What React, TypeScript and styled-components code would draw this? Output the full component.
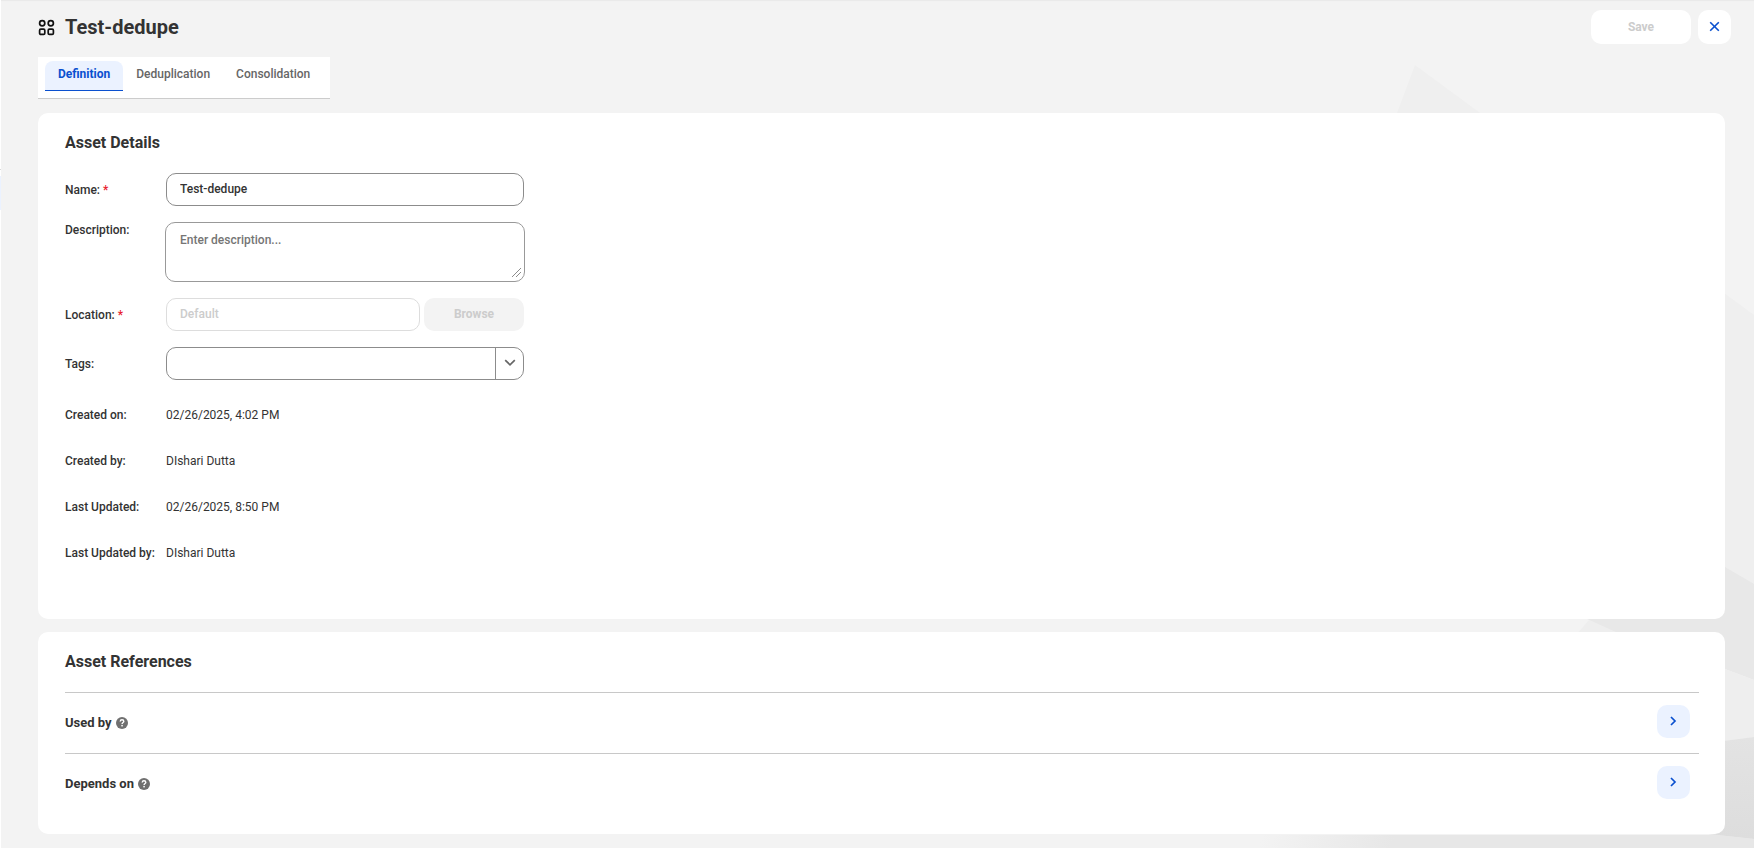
import React, { useState } from "react";
import styled, { createGlobalStyle } from "styled-components";

const GlobalStyle = createGlobalStyle`
  *, *::before, *::after { box-sizing: border-box; }
  body {
    margin: 0;
    background: #f3f3f3;
    color: #333333;
    font-family: Roboto, "Liberation Sans", sans-serif;
    font-size: 12px;
    line-height: 16px;
  }
  button, input, textarea, select { font: inherit; }
`;

const Page = styled.div`
  position: relative;
  display: flex;
  min-height: 100vh;
  overflow: hidden;
  box-shadow: inset 0 2px 1px -1px #e9e9e9;
`;

const Backdrop = styled.svg`
  position: absolute;
  top: 0;
  right: 0;
`;

const Rail = styled.aside`
  flex: none;
  width: 1px;
  padding-top: 169px;
  background: #ffffff;
`;

const RailItem = styled.div`
  height: 41px;
  border-top: 1px solid #d8d8d8;
  background: linear-gradient(#ffffff 6px, #ebf2ff 6px);
`;

const Main = styled.main`
  position: relative;
  flex: 1;
  min-width: 0;
  padding: 10px 29px 13px 37px;
`;

const Header = styled.header`
  display: flex;
  align-items: center;
  gap: 10px;
  height: 34px;
  margin: 0 -6px 13px 0;
`;

const Title = styled.h1`
  flex: 1;
  margin: 0;
  font-size: 20px;
  line-height: 34px;
  font-weight: 700;
`;

const Actions = styled.div`
  display: flex;
  gap: 7px;
`;

const Button = styled.button<{ $tone?: "white" | "grey" | "blue"; $square?: boolean }>`
  display: flex;
  flex: none;
  align-items: center;
  justify-content: center;
  width: ${(p) => (p.$square ? 33 : 100)}px;
  height: ${(p) => (p.$tone === "white" ? 34 : 33)}px;
  padding: 0 0 1px;
  border: 0;
  border-radius: 10px;
  background: ${(p) => (p.$tone === "blue" ? "#ebf2ff" : p.$tone === "grey" ? "#f3f3f3" : "#ffffff")};
  color: #0a50cf;
  font-weight: 700;
  &:disabled { color: #cccccc; }
`;

const TabList = styled.div`
  display: flex;
  width: fit-content;
  padding: 4px 7px 7px;
  margin-bottom: 14px;
  border-bottom: 1px solid #cccccc;
  background: #ffffff;
`;

const Tab = styled.button<{ $active: boolean }>`
  height: 30px;
  padding: 0 13px 3px;
  border: 0;
  border-bottom: 1px solid ${(p) => (p.$active ? "#0a50cf" : "transparent")};
  border-radius: ${(p) => (p.$active ? "8px 8px 0 0" : "0")};
  background: ${(p) => (p.$active ? "#ebf2ff" : "transparent")};
  color: ${(p) => (p.$active ? "#0a50cf" : "#666666")};
  font-weight: ${(p) => (p.$active ? 700 : 500)};
`;

const Card = styled.section`
  padding: 18px 26px 0 27px;
  border-radius: 10px;
  background: #ffffff;
`;

const DetailsCard = styled(Card)`
  padding-bottom: 58px;
  margin-bottom: 13px;
`;

const ReferencesCard = styled(Card)`
  padding-bottom: 20px;
`;

const Heading = styled.h2`
  margin: 0 0 18px;
  font-size: 16px;
  line-height: 24px;
  font-weight: 700;
`;

const Form = styled.form`
  display: flex;
  flex-direction: column;
  gap: 16px;
`;

const Row = styled.div<{ $top?: boolean }>`
  display: grid;
  grid-template-columns: 101px minmax(0, 358px);
  align-items: ${(p) => (p.$top ? "start" : "center")};
`;

const Label = styled.label`
  font-weight: 500;
`;

const Required = styled.span`
  color: #e8222e;
`;

const Control = styled.input`
  flex: 1;
  width: 100%;
  min-width: 0;
  height: 33px;
  padding: 0 13px 2px;
  border: 1px solid #8c8c8c;
  border-radius: 10px;
  background: #ffffff;
  color: #333333;
  font-weight: 500;
  &:disabled { border-color: #dddddd; color: #cccccc; }
`;

const TextArea = styled.textarea`
  display: block;
  width: calc(100% + 2px);
  height: 60px;
  margin: 0 -1px;
  padding: 9px 14px;
  border: 1px solid #999999;
  border-radius: 10px;
  color: #333333;
  font-weight: 500;
  resize: vertical;
  &::placeholder { color: #757575; }
  &::-webkit-resizer {
    background: linear-gradient(
        135deg,
        transparent 46%,
        #8c8c8c 47% 53%,
        transparent 54% 68%,
        #8c8c8c 69% 75%,
        transparent 76%
      ) 3px 2px / 9px 9px no-repeat;
  }
`;

const Inline = styled.div`
  display: flex;
  gap: 4px;
`;

const SelectBox = styled.div`
  position: relative;
  height: 33px;
`;

const Select = styled.select`
  width: 100%;
  height: 33px;
  padding: 0 42px 0 14px;
  border: 1px solid #8c8c8c;
  border-radius: 10px;
  background: #ffffff;
  color: #333333;
  appearance: none;
`;

const Arrow = styled.span`
  position: absolute;
  top: 0;
  right: 0;
  bottom: 0;
  display: flex;
  align-items: center;
  justify-content: center;
  width: 29px;
  padding: 0 1px 2px 0;
  border-left: 1px solid #8c8c8c;
  pointer-events: none;
`;

const Facts = styled.dl`
  display: grid;
  grid-template-columns: 101px 1fr;
  row-gap: 30px;
  margin: 27px 0 0;
`;

const Term = styled.dt`
  font-weight: 500;
`;

const Value = styled.dd`
  margin: 0;
`;

const Reference = styled.div`
  display: flex;
  align-items: flex-start;
  justify-content: space-between;
  height: 61px;
  padding: 12px 9px 0 0;
  border-top: 1px solid #c8c8c8;
`;

const ReferenceLabel = styled.div`
  display: flex;
  align-items: center;
  gap: 4px;
  height: 36px;
`;

const ReferenceName = styled.h3`
  margin: 0;
  font-size: 13px;
  line-height: 16px;
  font-weight: 700;
`;

const AssetIcon = () => (
  <svg width="17" height="17" viewBox="0 0 17 17" fill="none" stroke="#111111" strokeWidth="1.7" aria-hidden="true">
    <circle cx="4.2" cy="4.2" r="2.6" />
    <circle cx="12.8" cy="4.2" r="2.6" />
    <rect x="1.6" y="10.2" width="5.2" height="5.2" rx="1.2" />
    <rect x="10.2" y="10.2" width="5.2" height="5.2" rx="1.2" />
  </svg>
);

const CloseIcon = () => (
  <svg width="11" height="11" viewBox="0 0 11 11" stroke="#0a50cf" strokeWidth="1.6" aria-hidden="true">
    <path d="M1.200 1.200l8.600 8.600M9.800 1.200l-8.600 8.600" />
  </svg>
);

const ChevronRight = () => (
  <svg width="7" height="10" viewBox="0 0 7 10" fill="none" stroke="#0a50cf" strokeWidth="1.7" aria-hidden="true">
    <path d="M1 1l4 4-4 4" />
  </svg>
);

const ChevronDown = () => (
  <svg width="12" height="8" viewBox="0 0 12 8" fill="none" stroke="#666666" strokeWidth="1.7" aria-hidden="true">
    <path d="M1.2 1.2L6 5.8l4.800-4.600" />
  </svg>
);

const HelpIcon = () => (
  <svg width="12" height="12" viewBox="0 0 12 12" fill="none" aria-hidden="true">
    <circle cx="6" cy="6" r="6" fill="#707070" />
    <path d="M4.200 4.500C4.300 3.300 5 2.800 6 2.800s1.800.6 1.800 1.600C7.800 5.500 6.100 5.600 6.100 7" stroke="#ffffff" strokeWidth="1.400" />
    <rect x="5.300" y="7.900" width="1.500" height="1.500" fill="#ffffff" />
  </svg>
);

const Facets = () => (
  <Backdrop width="554" height="848" viewBox="1200 0 554 848" aria-hidden="true">
    <defs>
      <linearGradient id="floor" gradientUnits="userSpaceOnUse" x1="1262" y1="835" x2="1385" y2="870">
        <stop offset="0" stopColor="#f3f3f3" />
        <stop offset="1" stopColor="#e7e7e7" />
      </linearGradient>
      <linearGradient id="corner" x1="0" y1="0" x2="0" y2="1">
        <stop offset="0" stopColor="#e3e3e3" />
        <stop offset="1" stopColor="#dddddd" />
      </linearGradient>
    </defs>
    <path d="M1415 65L1754 315V600H1640L1397 113Z" fill="#efefef" />
    <path d="M1589 620L1578 633H1620V620Z" fill="#eeeeee" />
    <path d="M1585 618L1618 633H1754V584L1725 567L1640 520V618Z" fill="#e8e8e8" />
    <path d="M1700 633H1754V680L1725 669L1700 660Z" fill="#e8e8e8" />
    <path d="M1700 660L1725 669L1754 680V737L1700 744Z" fill="#eeeeee" />
    <path d="M1200 835H1717L1754 839V848H1200Z" fill="url(#floor)" />
    <path d="M1700 744L1754 737V839L1717 835L1700 833Z" fill="url(#corner)" />
  </Backdrop>
);

const tabs = ["Definition", "Deduplication", "Consolidation"];

const facts = [
  ["Created on:", "02/26/2025, 4:02 PM"],
  ["Created by:", "DIshari Dutta"],
  ["Last Updated:", "02/26/2025, 8:50 PM"],
  ["Last Updated by:", "DIshari Dutta"],
];

export default function App() {
  const [active, setActive] = useState(tabs[0]);

  return (
    <>
      <GlobalStyle />
      <Page>
        <Facets />
        <Rail>
          <RailItem />
        </Rail>
        <Main>
          <Header>
            <AssetIcon />
            <Title>Test-dedupe</Title>
            <Actions>
              <Button type="button" $tone="white" disabled>Save</Button>
              <Button type="button" $tone="white" $square aria-label="Close">
                <CloseIcon />
              </Button>
            </Actions>
          </Header>

          <TabList role="tablist">
            {tabs.map((tab) => (
              <Tab
                key={tab}
                type="button"
                role="tab"
                aria-selected={tab === active}
                $active={tab === active}
                onClick={() => setActive(tab)}
              >
                {tab}
              </Tab>
            ))}
          </TabList>

          <DetailsCard>
            <Heading>Asset Details</Heading>
            <Form>
              <Row>
                <Label htmlFor="name">Name: <Required>*</Required></Label>
                <Control id="name" defaultValue="Test-dedupe" />
              </Row>
              <Row $top>
                <Label htmlFor="description">Description:</Label>
                <TextArea id="description" placeholder="Enter description..." />
              </Row>
              <Row>
                <Label htmlFor="location">Location: <Required>*</Required></Label>
                <Inline>
                  <Control id="location" defaultValue="Default" disabled />
                  <Button type="button" $tone="grey" disabled>Browse</Button>
                </Inline>
              </Row>
              <Row>
                <Label htmlFor="tags">Tags:</Label>
                <SelectBox>
                  <Select id="tags" defaultValue="">
                    <option value="" />
                  </Select>
                  <Arrow><ChevronDown /></Arrow>
                </SelectBox>
              </Row>
            </Form>
            <Facts>
              {facts.map(([term, value]) => (
                <React.Fragment key={term}>
                  <Term>{term}</Term>
                  <Value>{value}</Value>
                </React.Fragment>
              ))}
            </Facts>
          </DetailsCard>

          <ReferencesCard>
            <Heading>Asset References</Heading>
            {["Used by", "Depends on"].map((name) => (
              <Reference key={name}>
                <ReferenceLabel>
                  <ReferenceName>{name}</ReferenceName>
                  <HelpIcon />
                </ReferenceLabel>
                <Button type="button" $tone="blue" $square aria-label={`Show ${name}`}>
                  <ChevronRight />
                </Button>
              </Reference>
            ))}
          </ReferencesCard>
        </Main>
      </Page>
    </>
  );
}
